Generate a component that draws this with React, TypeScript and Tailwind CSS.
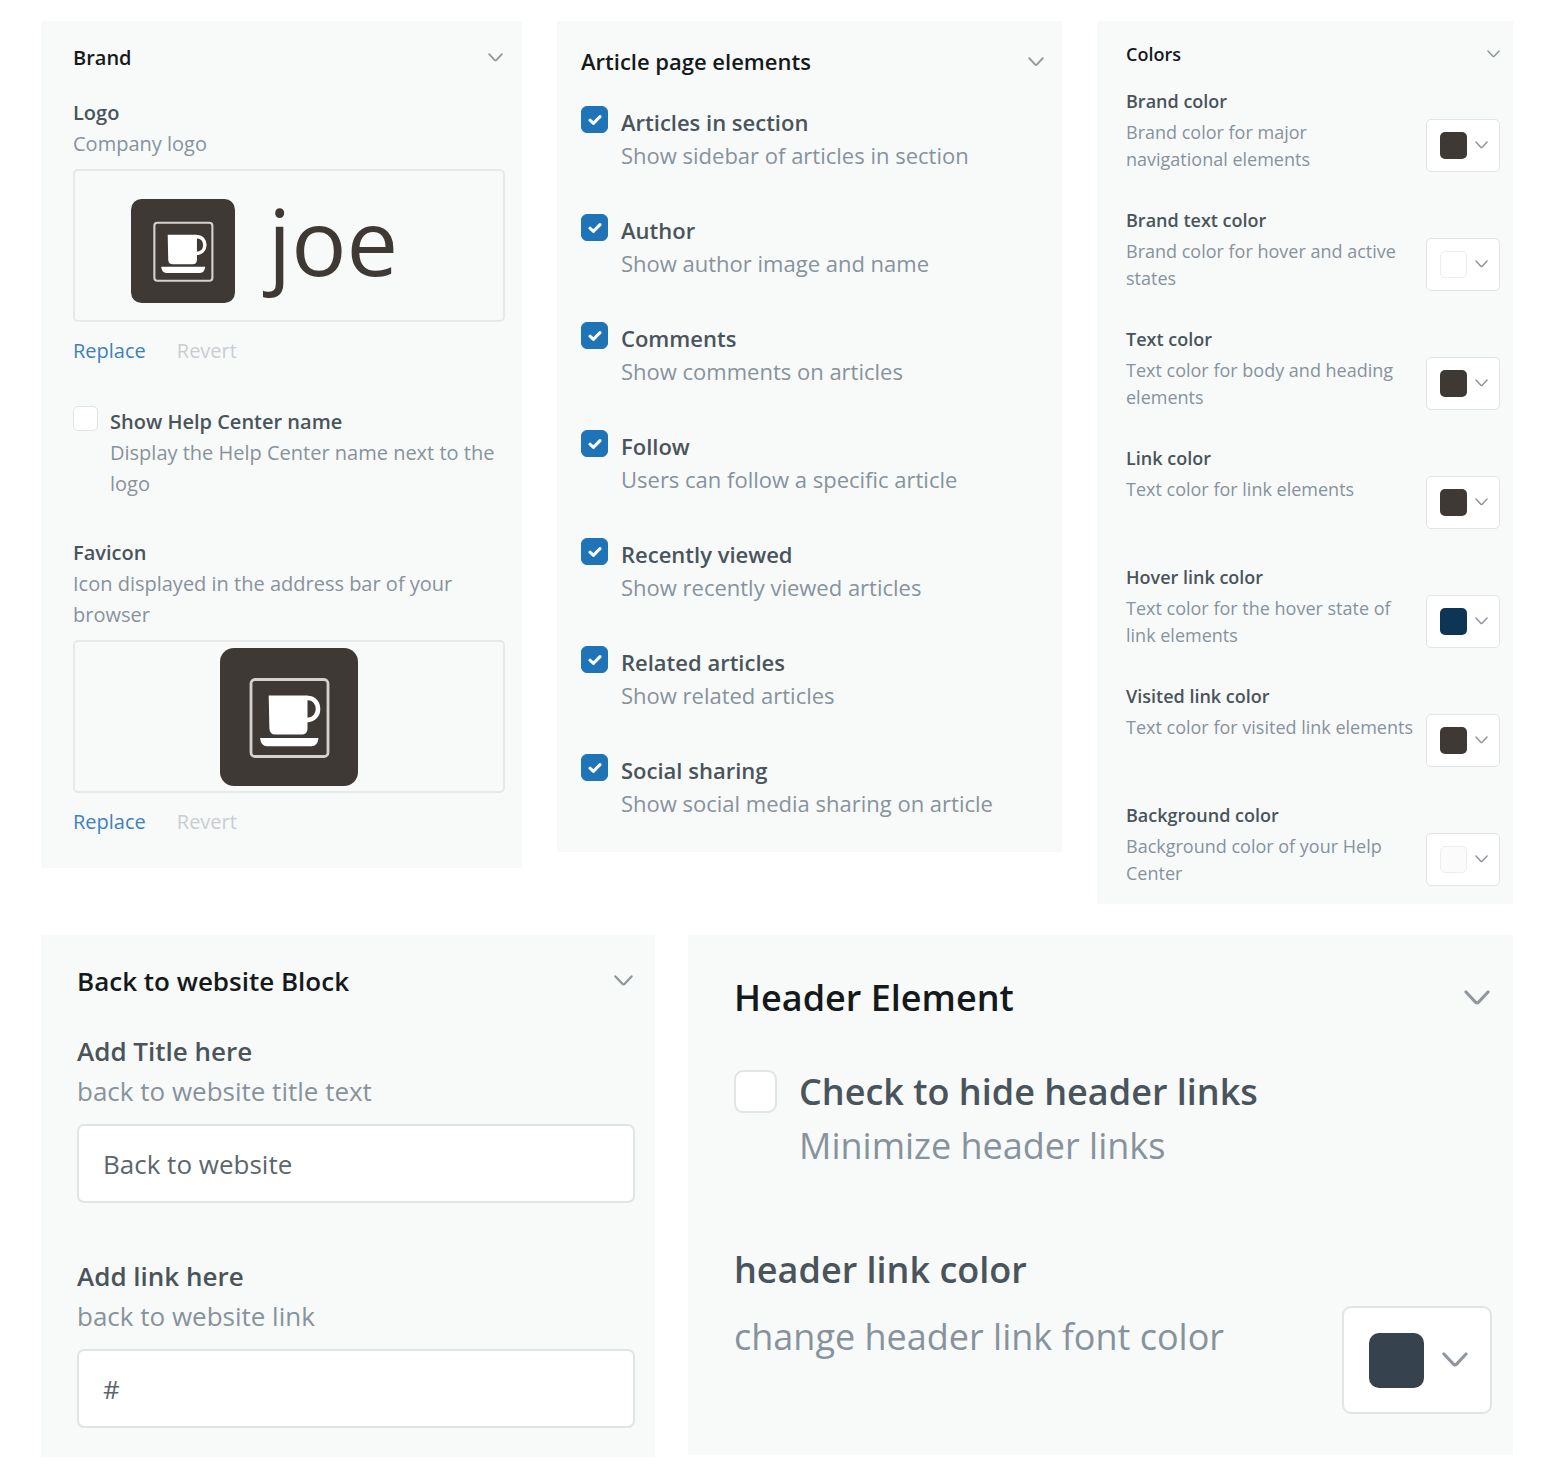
import { useId, useState, type ReactNode } from "react";

type Size = "sm" | "base" | "md" | "lg" | "xl";

const textSize: Record<Size, string> = {
  sm: "text-[18px] leading-[27px]",
  base: "text-[20px] leading-[31px]",
  md: "text-[22px] leading-[33px]",
  lg: "text-[26px] leading-[40px]",
  xl: "text-[36px] leading-[54px]",
};

const headerInset: Record<Size, string> = {
  sm: "",
  base: "pr-0.5",
  md: "",
  lg: "pr-0.5",
  xl: "pr-0.5",
};

const chevronSize: Record<Size, string> = {
  sm: "w-[13px]",
  base: "w-[15px]",
  md: "w-[16px]",
  lg: "w-[19px]",
  xl: "w-[26px]",
};

const checkboxSize: Record<Size, string> = {
  sm: "size-5 rounded",
  base: "size-[25px] rounded-[5px] border",
  md: "size-[27px] rounded-[6px] border",
  lg: "size-8 rounded-md",
  xl: "mt-[5px] size-[43px] rounded-[9px] border-2",
};

function Chevron({ size }: { size: Size }) {
  return (
    <svg
      viewBox="0 0 16 10"
      className={`${chevronSize[size]} shrink-0 text-[#8f979d]`}
      fill="none"
      stroke="currentColor"
      strokeWidth="1.9"
      strokeLinecap="round"
      strokeLinejoin="round"
      aria-hidden="true"
    >
      <path d="M1.2 1.2 7.2 7.6a1.1 1.1 0 0 0 1.6 0L14.8 1.2" />
    </svg>
  );
}

function Panel({
  title,
  size,
  className,
  children,
}: {
  title: string;
  size: Size;
  className: string;
  children: ReactNode;
}) {
  const [open, setOpen] = useState(true);
  return (
    <section className={`bg-[#f8faf9] ${textSize[size]} ${className}`}>
      <h2 className="font-semibold text-[#14191c]">
        <button
          type="button"
          aria-expanded={open}
          onClick={() => setOpen(!open)}
          className={`flex w-full items-center justify-between text-left ${headerInset[size]}`}
        >
          {title}
          <Chevron size={size} />
        </button>
      </h2>
      {open && children}
    </section>
  );
}

function CheckField({
  size,
  label,
  hint,
  checked = false,
  className = "",
}: {
  size: Size;
  label: string;
  hint: string;
  checked?: boolean;
  className?: string;
}) {
  const id = useId();
  return (
    <div className={`flex items-start ${className}`}>
      <span className="grid shrink-0 place-items-center">
        <input
          id={id}
          type="checkbox"
          defaultChecked={checked}
          aria-describedby={`${id}-hint`}
          className={`peer col-start-1 row-start-1 appearance-none border-[#e1e4e4] bg-white checked:border-[#1f73b7] checked:bg-[#1f73b7] ${checkboxSize[size]}`}
        />
        <svg
          viewBox="0 0 14 12"
          className="pointer-events-none col-start-1 row-start-1 hidden w-[14px] peer-checked:block"
          fill="none"
          stroke="white"
          strokeWidth="3"
          strokeLinecap="round"
          strokeLinejoin="round"
          aria-hidden="true"
        >
          <path d="M2 6.2 5.4 9.4 12 2.6" />
        </svg>
      </span>
      <div>
        <label htmlFor={id} className="block font-semibold text-[#49545c]">
          {label}
        </label>
        <p id={`${id}-hint`} className="text-[#87929d]">
          {hint}
        </p>
      </div>
    </div>
  );
}

function ColorField({
  size = "sm",
  label,
  hint,
  swatch,
}: {
  size?: Size;
  label: string;
  hint: string;
  swatch: string;
}) {
  const id = useId();
  const large = size === "xl";
  return (
    <div>
      <h3 id={id} className="font-semibold text-[#49545c]">
        {label}
      </h3>
      <div className={`flex items-start justify-between ${large ? "mt-[9px] gap-6" : "mt-1 min-h-[54px] gap-2"}`}>
        <p className={`whitespace-pre-line text-[#87929d] ${large ? "pt-1" : ""}`}>{hint}</p>
        <button
          type="button"
          aria-labelledby={id}
          className={`flex shrink-0 items-center border-[#e1e4e4] bg-white ${
            large
              ? "h-[108px] w-[150px] gap-[18px] rounded-[9px] border-2 pl-[25px]"
              : "h-[53px] w-[74px] gap-2 rounded-[5px] border pl-[13px]"
          }`}
        >
          <span className={`${large ? "size-[55px] rounded-[10px]" : "size-[27px] rounded-[5px]"} ${swatch}`} />
          <Chevron size={size} />
        </button>
      </div>
    </div>
  );
}

function CupIcon({ className }: { className: string }) {
  return (
    <svg viewBox="0 0 138 138" className={className} aria-hidden="true">
      <rect width="138" height="138" rx="14" fill="#3e3935" />
      <rect x="31" y="31.5" width="77" height="77" rx="4" fill="none" stroke="#d5d1ce" strokeWidth="2.8" />
      <path d="M48.7 47.5H87.5V80.5Q87.5 86.5 81.5 86.5H55.5Q49.6 86.5 49.4 80.5Z" fill="#fff" />
      <path d="M86.5 50H88C94 50 98 55 98 61S94 72 86.5 72.3" fill="none" stroke="#fff" strokeWidth="4.6" />
      <path d="M40 90H98.5Q97.5 98.3 91.5 98.3H47Q41 98.3 40 90Z" fill="#fff" />
    </svg>
  );
}

function ImageField({
  label,
  hint,
  className,
  children,
}: {
  label: string;
  hint: string;
  className: string;
  children: ReactNode;
}) {
  return (
    <div className={className}>
      <h3 className="font-semibold text-[#49545c]">{label}</h3>
      <p className="text-[#87929d]">{hint}</p>
      <div className="mt-[10px] flex h-[153px] items-center rounded-[5px] border-2 border-[#e6e9e8]">{children}</div>
      <div className="mt-[13px] flex gap-[31px]">
        <button type="button" className="text-[#3f7fbf]">
          Replace
        </button>
        <button type="button" disabled className="text-[#c9cdd1]">
          Revert
        </button>
      </div>
    </div>
  );
}

function TextField({
  label,
  hint,
  value,
  className,
}: {
  label: string;
  hint: string;
  value: string;
  className: string;
}) {
  const id = useId();
  return (
    <div className={className}>
      <label htmlFor={id} className="block font-semibold text-[#49545c]">
        {label}
      </label>
      <p id={`${id}-hint`} className="text-[#87929d]">
        {hint}
      </p>
      <input
        id={id}
        type="text"
        defaultValue={value}
        aria-describedby={`${id}-hint`}
        className="mt-[13px] block h-[79px] w-full rounded-[7px] border-2 border-[#e1e4e4] bg-white px-6 text-[#5c666d]"
      />
    </div>
  );
}

const articleElements = [
  { label: "Articles in section", hint: "Show sidebar of articles in section" },
  { label: "Author", hint: "Show author image and name" },
  { label: "Comments", hint: "Show comments on articles" },
  { label: "Follow", hint: "Users can follow a specific article" },
  { label: "Recently viewed", hint: "Show recently viewed articles" },
  { label: "Related articles", hint: "Show related articles" },
  { label: "Social sharing", hint: "Show social media sharing on article" },
];

const colors = [
  { label: "Brand color", hint: "Brand color for major\nnavigational elements", swatch: "bg-[#3e3935]" },
  {
    label: "Brand text color",
    hint: "Brand color for hover and active states",
    swatch: "border border-[#eceeee] bg-white",
  },
  { label: "Text color", hint: "Text color for body and heading elements", swatch: "bg-[#3e3935]" },
  { label: "Link color", hint: "Text color for link elements", swatch: "bg-[#3e3935]" },
  { label: "Hover link color", hint: "Text color for the hover state of link elements", swatch: "bg-[#0f3554]" },
  { label: "Visited link color", hint: "Text color for visited link elements", swatch: "bg-[#3e3935]" },
  {
    label: "Background color",
    hint: "Background color of your Help Center",
    swatch: "border border-[#eceeee] bg-[#fbfbfb]",
  },
];

export default function App() {
  return (
    <main className="flex min-h-screen flex-col gap-[31px] bg-white px-[41px] py-[21px] font-['Open_Sans',sans-serif]">
      <div className="grid grid-cols-[481fr_505fr_416fr] items-start gap-[35px]">
        <Panel title="Brand" size="base" className="pt-[21px] pr-[17px] pb-[31px] pl-8">
          <ImageField label="Logo" hint="Company logo" className="mt-6">
            <div className="flex items-center gap-[33px] pt-[10px] pl-14">
              <CupIcon className="size-[104px]" />
              <span className="pb-5 text-[92px] leading-[104px] text-[#3e3935]">joe</span>
            </div>
          </ImageField>
          <CheckField
            size="base"
            label="Show Help Center name"
            hint="Display the Help Center name next to the logo"
            className="mt-10 gap-3"
          />
          <ImageField label="Favicon" hint="Icon displayed in the address bar of your browser" className="mt-[38px]">
            <CupIcon className="mx-auto size-[138px]" />
          </ImageField>
        </Panel>

        <Panel title="Article page elements" size="md" className="pt-6 pr-[18px] pb-8 pl-6">
          <div className="mt-7 flex flex-col gap-[42px]">
            {articleElements.map((item) => (
              <CheckField key={item.label} size="md" checked className="gap-[13px]" {...item} />
            ))}
          </div>
        </Panel>

        <Panel title="Colors" size="sm" className="pt-5 pr-[13px] pb-[17px] pl-[29px]">
          <div className="mt-5 flex flex-col gap-[34px]">
            {colors.map((item) => (
              <ColorField key={item.label} {...item} />
            ))}
          </div>
        </Panel>
      </div>

      <div className="grid grid-cols-[614fr_825fr] items-start gap-[33px]">
        <Panel title="Back to website Block" size="lg" className="pt-[26px] pr-5 pb-[29px] pl-9">
          <TextField
            label="Add Title here"
            hint="back to website title text"
            value="Back to website"
            className="mt-[30px]"
          />
          <TextField label="Add link here" hint="back to website link" value="#" className="mt-[53px]" />
        </Panel>

        <Panel title="Header Element" size="xl" className="pt-9 pr-[21px] pb-[41px] pl-[46px]">
          <div className="mt-10 flex flex-col gap-[70px]">
            <CheckField
              size="xl"
              label="Check to hide header links"
              hint="Minimize header links"
              className="gap-[22px]"
            />
            <ColorField
              size="xl"
              label="header link color"
              hint="change header link font color"
              swatch="bg-[#37424f]"
            />
          </div>
        </Panel>
      </div>
    </main>
  );
}
